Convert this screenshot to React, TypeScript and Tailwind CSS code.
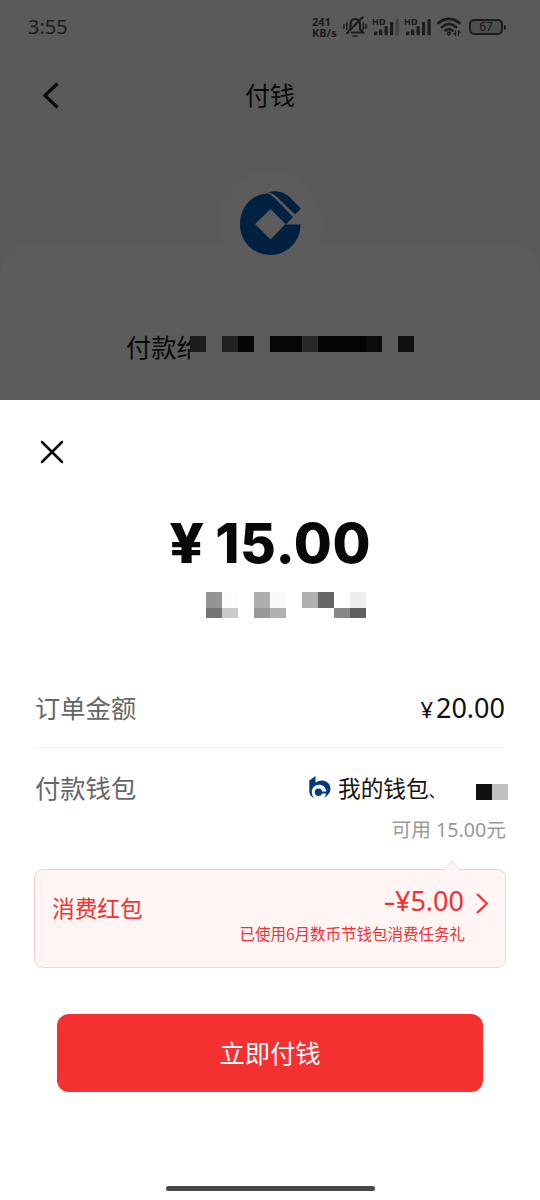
import React from 'react'
import clsx from 'clsx'

const BankLogo: React.FC = () => (
  <svg width="61" height="64" viewBox="0 0 61 64" fill="#00213f">
    <path
      fillRule="evenodd"
      d="M27 2.500C10 4 0 17 0 33.500C0 51 13.500 64 30.500 64C47 64 60.500 50.500 60.500 33.500H46L53 26L37 9.500C33 5.500 30.500 3 27 2.500ZM30.500 18L45.500 33L30.500 48.500L15 33Z"
    />
    <path d="M28 1.500C37-1.500 44 1 49 5.500L60.500 17V18L55 23.500L38 7C35 4 32 2 28 1.500Z" />
  </svg>
)

const WalletLogo: React.FC = () => (
  <svg width="22" height="23" viewBox="0 0 22 23" fill="#003b80">
    <path d="M0.300 4.500L6.500 0V6.500C9.500 4.500 12.500 4 15 4.800C19 6 21.500 9 21.500 12.500C21.500 16.500 19 20 14.500 21.800C16.500 20 17.500 18 17.300 15.500C17 11.500 13.800 8.800 10 8.800C6 8.800 2.800 12 2.800 16C2.800 18.500 3.800 20.700 5.500 22.300C2 21 0.300 18.500 0.300 15Z" />
    <circle cx="9.500" cy="16.300" r="3.700" />
    <path d="M12 15.500H18.500V17.500H12Z" />
  </svg>
)

const SignalIcon: React.FC<{ weak?: boolean }> = ({ weak }) => (
  <div className="relative h-[20px] w-[26px]">
    <span className="absolute -left-px top-0 text-[9px] font-bold leading-[8px]">HD</span>
    <svg className="absolute left-0 top-0" width="26" height="20" viewBox="0 0 26 20" fill="#1c1c1c">
      <rect x="1" y="13.500" width="3.200" height="3.800" rx="1" />
      <rect x="6" y="11.500" width="3.200" height="5.800" rx="1" />
      <rect x="11.500" y="8" width="3.200" height="9.300" rx="1" />
      <rect x="17" y="4" width="3.200" height="13.300" rx="1" />
      <rect x="22.500" y="1" width="3.200" height="16.300" rx="1" fill={weak ? '#444444' : '#1c1c1c'} />
    </svg>
  </div>
)

const StatusBar: React.FC = () => (
  <div className="flex h-[54px] items-center justify-between pl-7 pr-[34px] font-['Noto_Sans','Noto_Sans_CJK_SC',sans-serif] text-[#1c1c1c]">
    <span className="text-[20px] leading-none">3:55</span>
    <div className="flex items-center">
      <div className="w-[31px] text-[11px] font-bold leading-[11px]">
        <div>241</div>
        <div>KB/s</div>
      </div>
      {/* Muted bell */}
      <svg width="24" height="22" viewBox="0 0 24 22" fill="none" stroke="#1c1c1c" strokeWidth="2.200" strokeLinecap="round">
        <path d="M5 16.500L7.500 13V8C8 4.500 9.500 3 12 3C14.500 3 16.500 4.500 17 8V13L20 16.500H9" />
        <path d="M19.500 1.500L4 17" />
        <path d="M10 20H14M1 8.500V12.500M3.800 7V13.500M23 8.500V12.500M20.300 7V13.500" strokeWidth="1.500" />
      </svg>
      <div className="ml-1.5 mt-[2px] flex gap-[6px]">
        <SignalIcon weak />
        <SignalIcon />
      </div>
      <svg className="ml-[6px]" width="25" height="22" viewBox="0 0 25 22" fill="none" stroke="#1c1c1c" strokeWidth="2.700" strokeLinecap="round">
        <path d="M1.500 7C8 1.500 16 1.500 22.500 7M5 11C9.500 7 14.500 7 19 11M8.500 14.500C11 12.500 13 12.500 15.500 14.500" />
        <circle cx="12" cy="17.500" r="0.800" />
        <path d="M18.500 15V19L17 17.500M21.500 19V15L23 16.500" strokeWidth="1.300" />
      </svg>
      <div className="ml-[7px] flex items-center gap-px">
        <div className="flex h-4 w-[34px] items-center justify-center rounded-[5px] border-2 border-[#1c1c1c] bg-[#4e4e4e] text-[12px] leading-none">67</div>
        <div className="h-[5px] w-[2px] rounded-r bg-[#1c1c1c]" />
      </div>
    </div>
  </div>
)

// Each cell is one 16px block, '' leaves a gap
const Blocks: React.FC<{ cells: string[]; className?: string }> = ({ cells, className }) => (
  <div className={clsx('flex', className)}>
    {cells.map((color, i) => (
      <span key={i} className="h-full w-4 shrink-0" style={{ backgroundColor: color || 'transparent' }} />
    ))}
  </div>
)

const payeeCells = ['#1c1c1c', '', '#222222', '#050505', '', '#060606', '#060606', '#282828', '#050505', '#050505', '#050505', '#0b0b0b', '', '#101010']

const PayPage: React.FC = () => (
  <div className="h-[400px] overflow-hidden bg-[#5a5a5a] font-['Noto_Sans_CJK_SC',sans-serif]">
    <StatusBar />
    <div className="grid h-[81px] grid-cols-3 items-center px-10">
      <svg width="22" height="28" viewBox="0 0 22 28" fill="none" stroke="#0a0a0a" strokeWidth="3.200">
        <path d="M17.500 2.500L5 14.500L17.500 26.500" />
      </svg>
      <h1 className="text-center text-[25px] leading-none text-[#0a0a0a]">付钱</h1>
    </div>
    <div className="mt-[108px] h-40 rounded-t-[32px] bg-[#5c5c5c]">
      <div className="flex justify-center">
        <div className="-mt-[72px] flex h-[104px] w-[104px] items-center justify-center rounded-full bg-[#5c5c5c]">
          <BankLogo />
        </div>
      </div>
      <div className="mt-[55px] flex h-8 items-center pl-[126px]">
        <div className="w-[64px] shrink-0 whitespace-nowrap text-[25.300px] leading-8 text-[#0a0a0a]">付款给</div>
        <div className="relative h-8 bg-[#5c5c5c] pt-[6px]">
          <Blocks cells={payeeCells} className="h-4" />
        </div>
      </div>
    </div>
  </div>
)

const PaySheet: React.FC = () => (
  <div className="flex h-[800px] flex-col bg-white font-['Noto_Sans_CJK_SC',sans-serif]">
    <div className="px-10 pt-10">
      <svg width="24" height="24" viewBox="0 0 24 24" stroke="#111111" strokeWidth="2.600" strokeLinecap="round">
        <path d="M2 2L22 22M22 2L2 22" />
      </svg>
    </div>

    <div className="mt-[47px] flex h-[64px] items-center justify-center gap-[12px] pl-[2px] font-['Inter','Noto_Sans_CJK_SC',sans-serif] text-[55px] font-extrabold leading-none tracking-[0.700px] text-[#080808]">
      <span className="inline-block scale-x-110">¥</span>
      <span>15.00</span>
    </div>
    <div className="mt-[17px] h-[27px] pl-[206px]">
      <Blocks cells={['#949494', '#fcfcfc', '', '#aeaeae', '#f9f9f9', '', '#b0b0b0', '#666666', '', '#eeeeee']} className="h-4" />
      <Blocks cells={['#757575', '#c9c9c9', '', '#989898', '#b0b0b0', '', '', '', '#888888', '#606060']} className="h-[10px]" />
    </div>

    <div className="mx-[35px] mt-[48px] flex h-[81px] items-center justify-between border-b border-[#f2f2f2]">
      <span className="text-[25.300px] leading-9 text-[#666666]">订单金额</span>
      <span className="mt-[2px] flex items-baseline gap-[3px] font-['Noto_Sans','Noto_Sans_CJK_SC',sans-serif] text-[27px] leading-9 text-[#111111]">
        <span className="text-[22px]">¥</span>20.00
      </span>
    </div>

    <div className="ml-[35px] mr-8 mt-[20px] flex h-10 items-center">
      <span className="text-[25.300px] text-[#666666]">付款钱包</span>
      <div className="ml-auto flex items-center">
        <WalletLogo />
        <span className="ml-[7px] w-[106px] whitespace-nowrap text-[22.700px] text-[#111111]">
          我的钱包<span className="text-[16px]">、</span>
        </span>
        <Blocks cells={['', '', '#111111', '#c0c0c0']} className="mt-[8px] h-4" />
      </div>
    </div>
    <div className="mr-[34px] mt-[7px] text-right font-['Noto_Sans','Noto_Sans_CJK_SC',sans-serif] text-[19.700px] leading-[30px] text-[#999999]">可用 15.00元</div>

    {/* Red packet */}
    <div className="relative mx-[34px] mt-[24px] flex h-[99px] justify-between rounded-[9px] border border-[#fccfcf] bg-[#fff5f5] pl-[17px] pr-[17px] text-[#f43030]">
      <svg className="absolute -top-[10px] right-[44px]" width="18" height="11" viewBox="0 0 18 11" fill="#fff5f5" stroke="#fccfcf">
        <path d="M0.500 10.500L9 1L17.500 10.500" />
      </svg>
      <span className="mt-[22px] text-[22.700px] leading-8">消费红包</span>
      <div className="mt-[13px] flex flex-col items-end">
        <div className="flex h-9 items-center gap-3">
          <span className="font-['Noto_Sans','Noto_Sans_CJK_SC',sans-serif] text-[27px]">
            <span className="-mr-px inline-block origin-right scale-x-140">-</span>¥5.00
          </span>
          <svg className="mt-[3px]" width="12" height="22" viewBox="0 0 12 22" fill="none" stroke="#f43030" strokeWidth="2.200">
            <path d="M1 2L11 11.500L1 21" />
          </svg>
        </div>
        <span className="mr-[23px] text-[15.500px] leading-7">已使用6月数币节钱包消费任务礼</span>
      </div>
    </div>

    <button className="mx-[57px] mt-[46px] h-[78px] rounded-[12px] bg-[#f43030] text-[25.300px] text-white">立即付钱</button>
    <div className="mx-auto mt-auto mb-[9px] h-[5px] w-[209px] rounded-full bg-[#484848]" />
  </div>
)

export default function App() {
  return (
    <div className="w-full">
      <PayPage />
      <PaySheet />
    </div>
  )
}
